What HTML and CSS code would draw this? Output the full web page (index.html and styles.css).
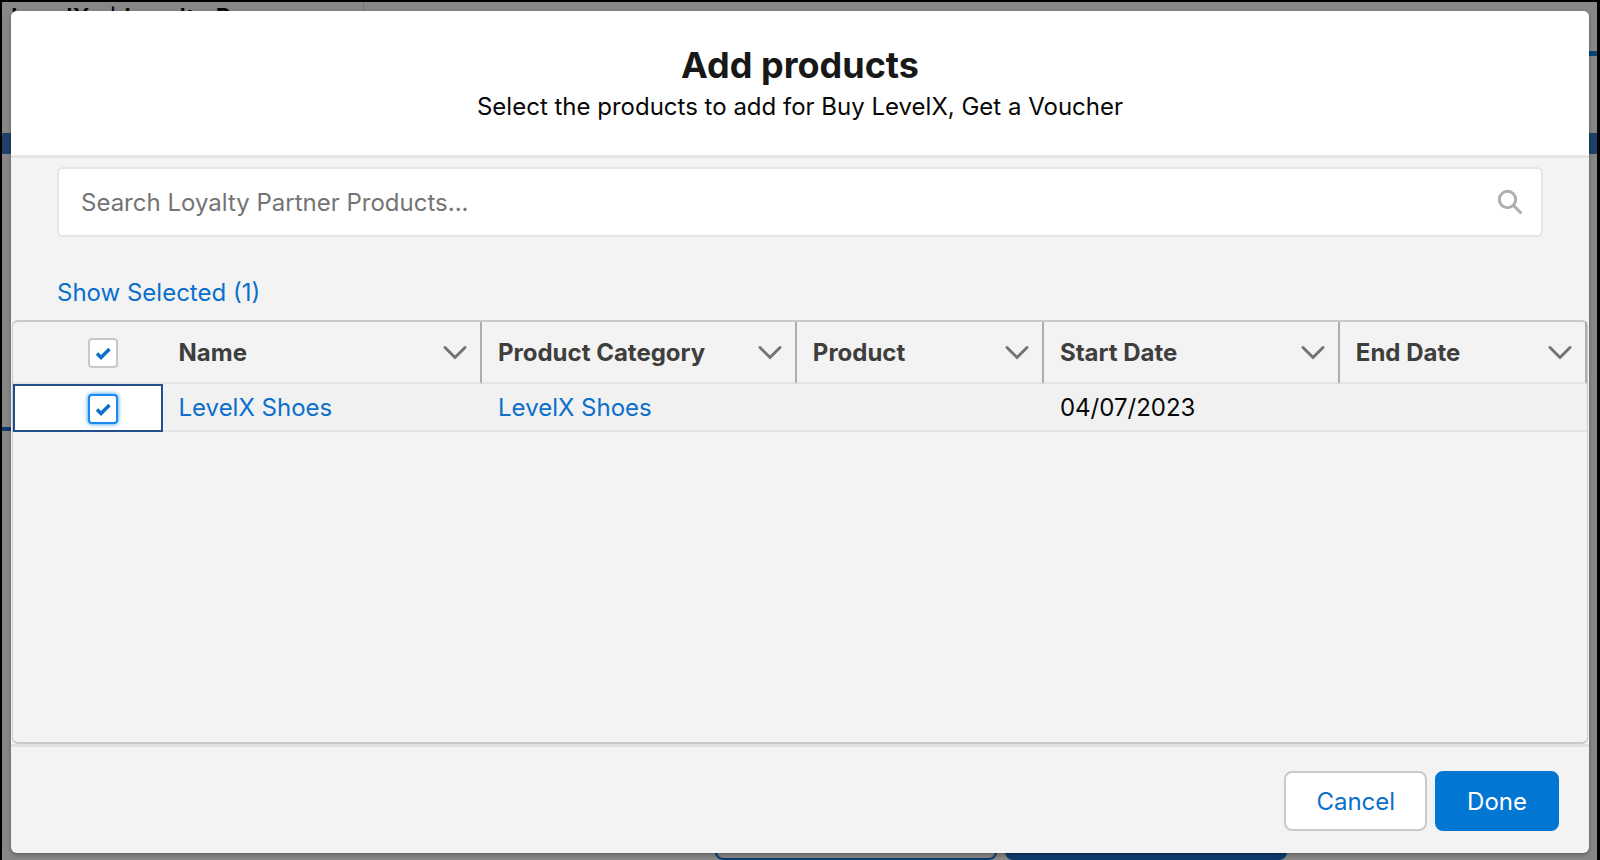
FILE: index.html
```html
<!DOCTYPE html>
<html lang="en">
<head>
<meta charset="utf-8">
<title>Add products</title>
<link rel="stylesheet" href="styles.css">
</head>
<body>
<div class="page" aria-hidden="true">
  <div class="page-title"><span>LevelX</span><span class="page-pipe">|</span><span>Loyalty Program</span></div>
  <div class="page-divider"></div>
  <div class="page-tab"></div>
  <div class="page-band"></div>
  <div class="page-line"></div>
  <div class="page-actions"><span class="page-button"></span><span class="page-button page-button-brand"></span></div>
</div>
<main class="modal" role="dialog" aria-labelledby="title">
  <header class="modal-header">
    <h1 class="modal-title" id="title">Add products</h1>
    <p class="modal-subtitle">Select the products to add for Buy LevelX, Get a Voucher</p>
  </header>
  <section class="modal-body">
    <div class="search">
      <input class="search-input" type="text" aria-label="Search Loyalty Partner Products" placeholder="Search Loyalty Partner Products...">
      <svg class="search-icon" viewBox="0 0 26 26"><circle cx="10.5" cy="10.5" r="8.2"/><path d="M16.5 16.5 23.500 23.500"/></svg>
    </div>
    <a class="show-selected" href="#">Show Selected (1)</a>
    <div class="table-wrap">
      <table class="table">
        <colgroup><col class="col-check"><col class="col-name"><col class="col-category"><col class="col-product"><col class="col-start"><col class="col-end"></colgroup>
        <thead>
          <tr>
            <th class="check-cell"><input class="check" type="checkbox" aria-label="Select all" checked></th>
            <th><div class="head"><span>Name</span><svg class="chevron" viewBox="0 0 24 16"><path d="M2 2.500 12 12.500 22 2.500"/></svg></div></th>
            <th><div class="head"><span>Product Category</span><svg class="chevron" viewBox="0 0 24 16"><path d="M2 2.500 12 12.500 22 2.500"/></svg></div></th>
            <th><div class="head"><span>Product</span><svg class="chevron" viewBox="0 0 24 16"><path d="M2 2.500 12 12.500 22 2.500"/></svg></div></th>
            <th><div class="head"><span>Start Date</span><svg class="chevron" viewBox="0 0 24 16"><path d="M2 2.500 12 12.500 22 2.500"/></svg></div></th>
            <th><div class="head"><span>End Date</span><svg class="chevron" viewBox="0 0 24 16"><path d="M2 2.500 12 12.500 22 2.500"/></svg></div></th>
          </tr>
        </thead>
        <tbody>
          <tr>
            <td class="check-cell check-cell-active"><input class="check check-focus" type="checkbox" aria-label="Select LevelX Shoes" checked></td>
            <td><a href="#">LevelX Shoes</a></td>
            <td><a href="#">LevelX Shoes</a></td>
            <td></td>
            <td>04/07/2023</td>
            <td></td>
          </tr>
        </tbody>
      </table>
    </div>
  </section>
  <footer class="modal-footer">
    <button class="button" type="button">Cancel</button>
    <button class="button button-brand" type="button">Done</button>
  </footer>
</main>
</body>
</html>
```
FILE: styles.css
```css
* { box-sizing: border-box; }
body {
  margin: 0;
  height: 100vh;
  overflow: hidden;
  display: flex;
  padding: 11px 11px 7px;
  font-family: Inter, "Liberation Sans", sans-serif;
  font-size: 24px;
  line-height: 32px;
  color: #080707;
  background: #878787;
}
a { color: #0b6fcb; text-decoration: none; }

/* Dimmed page behind the dialog */
.page {
  position: absolute;
  inset: 0;
  overflow: hidden;
  border: 2px solid #000;
  border-right-width: 3px;
  border-bottom: 0;
}
.page-title { position: absolute; left: 9px; top: 0; display: flex; font-weight: 600; white-space: nowrap; }
.page-pipe { padding: 0 8px 0 20px; font-size: 18px; }
.page-divider { position: absolute; left: 361px; top: 0; width: 1px; height: 48px; background: #777; }
.page-tab { position: absolute; right: 0; top: 49px; width: 60px; height: 5px; background: #0b4279; }
.page-band { position: absolute; left: 0; right: 0; top: 131px; height: 21px; background: #1f4068; }
.page-line { position: absolute; left: 0; top: 425px; width: 60px; height: 4px; background: #0d3c6c; }
.page-actions { position: absolute; left: 713px; bottom: 0; display: flex; gap: 8px; }
.page-button { width: 282px; height: 58px; border: 2px solid #0d3c6c; border-radius: 8px; }
.page-button-brand { background: #0d3c6c; }

.modal {
  position: relative;
  flex: 1;
  display: flex;
  flex-direction: column;
  overflow: hidden;
  border-radius: 6px;
  background: #f3f3f3;
  box-shadow: 0 2px 4px rgba(0, 0, 0, .3);
}
.modal-header {
  padding: 32px 32px 32px;
  text-align: center;
  background: #fff;
  border-bottom: 3px solid #e5e5e5;
}
.modal-title { margin: 0 0 4px; font-size: 36px; line-height: 44px; font-weight: 700; color: #181818; }
.modal-subtitle { margin: 0; }
.modal-body { flex: 1; display: flex; flex-direction: column; padding-top: 9px; }

.search { position: relative; margin: 0 46px; }
.search-input {
  display: block;
  width: 100%;
  height: 70px;
  padding: 0 72px 0 22px;
  border: 2px solid #e5e5e5;
  border-radius: 6px;
  background: #fff;
  font: inherit;
}
.search-input::placeholder { color: #747474; opacity: 1; }
.search-icon { position: absolute; right: 20px; top: 22px; width: 26px; height: 26px; fill: none; stroke: #aeaeae; stroke-width: 3; stroke-linecap: round; }
.show-selected { align-self: flex-start; margin: 40px 46px 11px; }

.table-wrap {
  flex: 1;
  border: 2px solid #c9c9c9;
  border-left-width: 1px;
  border-right-width: 1px;
  border-radius: 6px;
  margin: 0 1px;
}
.table { width: 100%; table-layout: fixed; border-collapse: separate; border-spacing: 0; }
.col-check { width: 9.5%; }
.col-name { width: 20.3%; }
.col-category { width: 20%; }
.col-product { width: 15.7%; }
.col-start { width: 18.8%; }
.col-end { width: 15.7%; }
.table th, .table td { padding: 2px 16px 0; text-align: left; border-bottom: 2px solid #e5e5e5; }
.table th { height: 62px; font-weight: 700; color: #3e3e3c; border-right: 2px solid #aeaeae; }
.table td { height: 48px; background: #f1f1f1; }
.table th.check-cell { border-right: 0; }
.table .check-cell { padding: 2px 45px 0 0; text-align: right; }
.table .check-cell-active { background: #fff; border: 2px solid #23508c; padding-right: 43px; }
.head { display: flex; align-items: center; justify-content: space-between; white-space: nowrap; }
.chevron { width: 24px; height: 16px; margin-right: -3px; fill: none; stroke: #747474; stroke-width: 3; stroke-linecap: round; }
.check {
  appearance: none;
  display: block;
  margin: 0 0 0 auto;
  width: 30px;
  height: 30px;
  border: 2px solid #c9c9c9;
  border-radius: 4px;
  background: #fff url("data:image/svg+xml,%3Csvg xmlns='http://www.w3.org/2000/svg' viewBox='0 0 26 26'%3E%3Cpath d='M7 13.500l4 4L19.500 9' fill='none' stroke='%230b6fcb' stroke-width='3.500'/%3E%3C/svg%3E") center / 26px 26px no-repeat;
}
.check-focus { border-color: #1b8aee; box-shadow: 0 0 4px #1b8aee; }

.modal-footer {
  display: flex;
  justify-content: flex-end;
  gap: 8px;
  padding: 24px 30px 22px;
  border-top: 3px solid #e2e2e2;
}
.button {
  height: 60px;
  padding: 1px 30px 0;
  border: 2px solid #c9c9c9;
  border-radius: 8px;
  background: #fff;
  color: #0b6fcb;
  font: inherit;
}
.button-brand { border-color: #0176d3; background: #0176d3; color: #fff; }
```
